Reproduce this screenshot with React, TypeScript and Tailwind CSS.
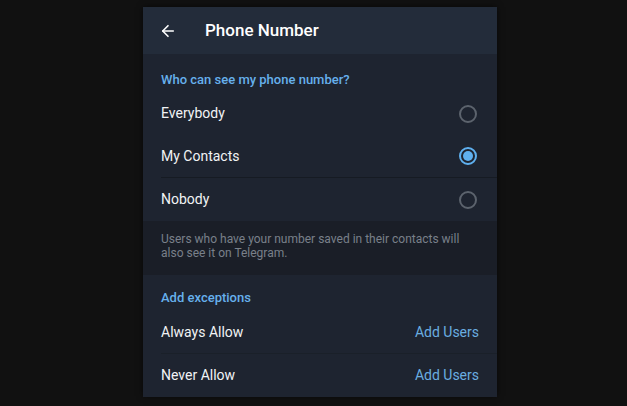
import { ArrowLeft } from "lucide-react";

function Radio({ checked }: { checked?: boolean }) {
  if (checked) {
    return (
      <span className="flex h-[18px] w-[18px] items-center justify-center rounded-full border-2 border-[#5fb0ef]">
        <span className="h-[10px] w-[10px] rounded-full bg-[#5fb0ef]" />
      </span>
    );
  }
  return <span className="h-[18px] w-[18px] rounded-full border-2 border-[#5c636d]" />;
}

function OptionRow({ label, checked, divider }: { label: string; checked?: boolean; divider?: boolean }) {
  return (
    <div className="pl-[18px]">
      <div className={`flex h-[43px] items-center justify-between pr-[20px] ${divider ? "border-b border-[#161b23]" : ""}`}>
        <span className="text-[14px] text-[#f1f3f5]">{label}</span>
        <Radio checked={checked} />
      </div>
    </div>
  );
}

function LinkRow({ label, divider }: { label: string; divider?: boolean }) {
  return (
    <div className="pl-[18px]">
      <div className={`flex h-[43px] items-center justify-between pr-[18px] ${divider ? "border-b border-[#1a2029]" : ""}`}>
        <span className="text-[14px] text-[#f1f3f5]">{label}</span>
        <span className="text-[14px] text-[#6aaee0]">Add Users</span>
      </div>
    </div>
  );
}

export default function App() {
  return (
    <div className="flex h-[406px] w-[627px] bg-[#111111] pl-[143px] pt-[7px] font-['Roboto',sans-serif]">
      <div className="flex h-[389px] w-[354px] flex-col bg-[#1e2430] shadow-[0_0_6px_rgba(0,0,0,0.6)]">
        <header className="flex h-[47px] shrink-0 items-center bg-[#232c3a]">
          <ArrowLeft className="ml-[16px] h-[18px] w-[18px] text-white" strokeWidth={2.2} />
          <h1 className="ml-[28px] text-[17px] font-medium text-white">Phone Number</h1>
        </header>

        <section className="bg-[#1e2430] pt-[17px]">
          <p className="px-[18px] text-[13px] font-medium leading-[18px] text-[#66b0ec]">Who can see my phone number?</p>
          <div className="mt-[3px]">
            <OptionRow label="Everybody" />
            <OptionRow label="My Contacts" checked divider />
            <OptionRow label="Nobody" />
          </div>
        </section>

        <div className="bg-[#1a1e27] px-[18px] pb-[15px] pt-[11px] text-[12px] leading-[14px] text-[#79808a]">
          Users who have your number saved in their contacts will also see it on Telegram.
        </div>

        <section className="flex-1 bg-[#1e2430] pt-[14px]">
          <p className="px-[18px] text-[13px] font-medium leading-[18px] text-[#66b0ec]">Add exceptions</p>
          <div className="mt-[4px]">
            <LinkRow label="Always Allow" divider />
            <LinkRow label="Never Allow" />
          </div>
        </section>
      </div>
    </div>
  );
}
